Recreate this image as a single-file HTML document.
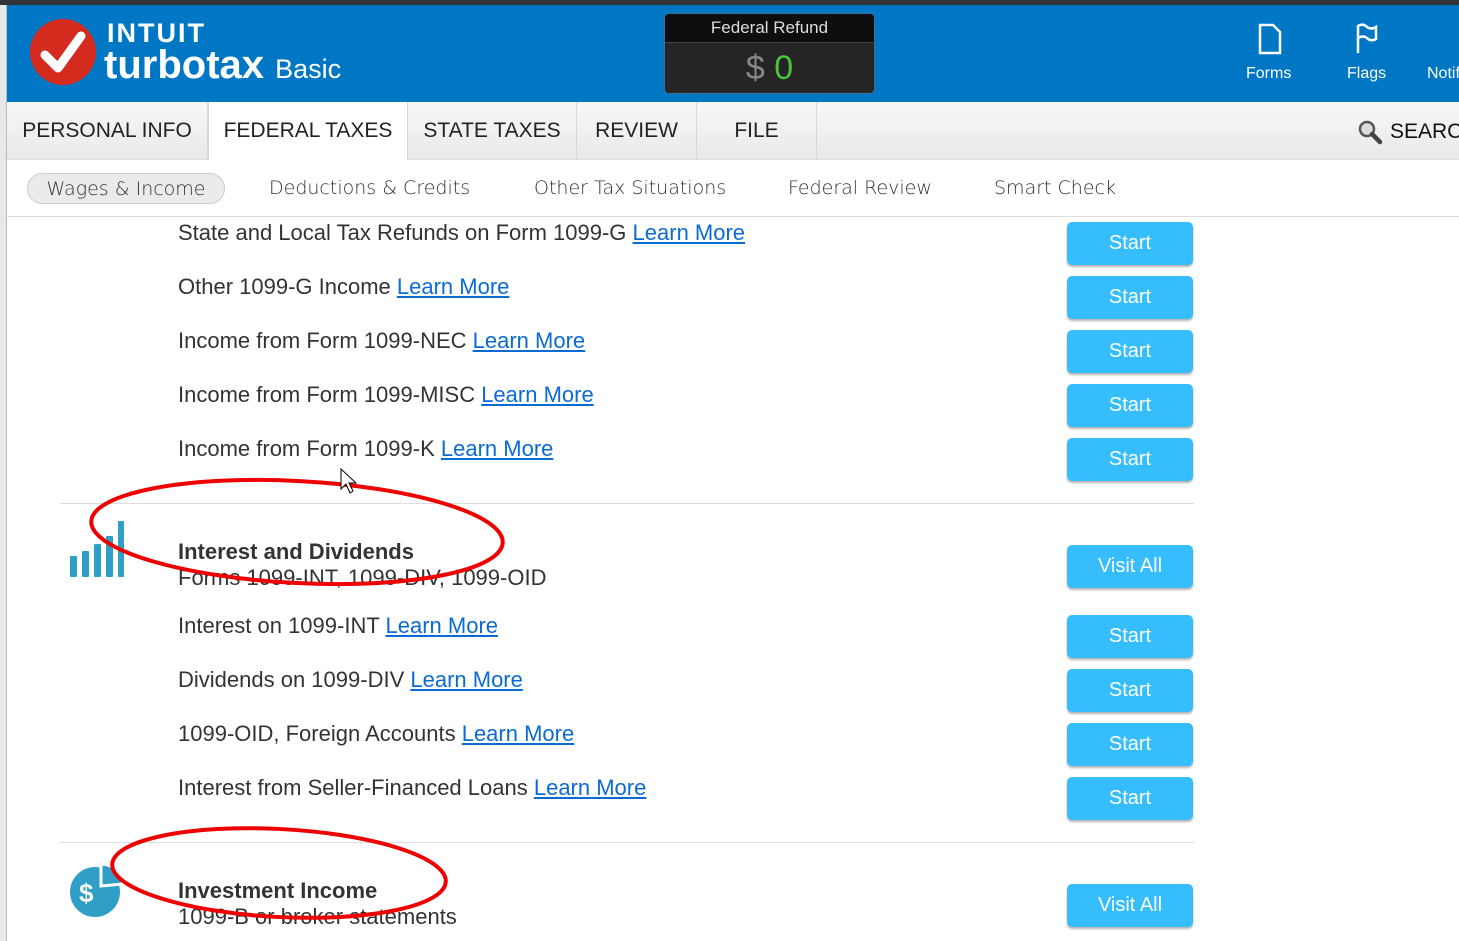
<!DOCTYPE html>
<html><head><style>
*{margin:0;padding:0;box-sizing:border-box}
body{width:1459px;height:941px;overflow:hidden;background:#fff;font-family:"Liberation Sans",Arial,sans-serif;position:relative;color:#333}
.abs{position:absolute}
.topbar{left:0;top:0;width:1459px;height:5px;background:#333438}
.leftstrip{left:0;top:0;width:7px;height:941px;background:#e8e8e8;border-right:1px solid #bbb}
.header{left:7px;top:5px;width:1452px;height:97px;background:#0077c5}
.nav{left:7px;top:102px;width:1452px;height:58px;background:linear-gradient(#f7f7f7,#e9e9e9);border-bottom:1px solid #ddd}
.tab{position:absolute;top:0;height:57px;line-height:58px;font-size:21px;color:#222;text-align:center;border-right:1px solid #d8d8d8}
.sub{left:7px;top:160px;width:1452px;height:57px;background:#fff;border-bottom:1px solid #ddd}
.st{position:absolute;top:13px;height:31px;line-height:31px;font-size:19px;color:#333;font-family:"DejaVu Sans",sans-serif;font-weight:300;letter-spacing:0}
.row{position:absolute;left:178px;font-size:22px;color:#333;white-space:nowrap}
.row a{color:#0b6bd4;text-decoration:underline}
.btn{position:absolute;left:1067px;width:126px;height:43px;background:#35bdfd;border-radius:5px;color:#fff;font-size:20px;text-align:center;line-height:43px;box-shadow:0 2px 2px rgba(0,0,0,.3)}
.hr{position:absolute;left:60px;width:1134px;height:1px;background:#ddd}
</style></head><body>
<div class="abs leftstrip"></div>
<div class="abs topbar"></div>
<div class="abs header">
 <svg class="abs" style="left:22px;top:13px" width="68" height="68" viewBox="0 0 68 68"><circle cx="34" cy="34" r="33" fill="#d52b1e"/><path d="M16 37 L29 50 L52 18" stroke="#fff" stroke-width="9" fill="none" stroke-linecap="round" stroke-linejoin="round"/></svg>
 <div class="abs" style="left:100px;top:13px;color:#fff;font-size:27px;font-weight:bold;letter-spacing:2px">INTUIT</div>
 <div class="abs" style="left:97px;top:38px;color:#fff;font-size:40px;font-weight:bold;letter-spacing:0">turbotax <span style="font-size:27px;font-weight:normal">Basic</span></div>
 <div class="abs" style="left:657px;top:8px;width:211px;height:81px;background:#252525;border:1px solid #3a6f99;border-radius:5px;overflow:hidden">
  <div style="height:29px;background:#0e0e0e;border-bottom:1px solid #444;color:#ddd;font-size:17px;text-align:center;line-height:28px">Federal Refund</div>
  <div style="text-align:center;font-size:34px;line-height:50px"><span style="color:#888">$</span> <span style="color:#4cc23f">0</span></div>
 </div>
 <svg class="abs" style="left:1251px;top:18px" width="24" height="32" viewBox="0 0 24 32"><path d="M2 2 H15 L22 9 V30 H2 Z" fill="none" stroke="#fff" stroke-width="2.5"/></svg>
 <div class="abs" style="left:1239px;top:60px;color:#fff;font-size:16px">Forms</div>
 <svg class="abs" style="left:1348px;top:18px" width="24" height="32" viewBox="0 0 24 32"><path d="M3 30 V3 Q8 0 12 4 Q16 7 21 4 V16 Q16 19 12 15 Q8 12 3 15" fill="none" stroke="#fff" stroke-width="2.5"/></svg>
 <div class="abs" style="left:1340px;top:60px;color:#fff;font-size:16px">Flags</div>
 <div class="abs" style="left:1420px;top:60px;color:#fff;font-size:16px">Notif</div>
</div>
<div class="abs nav">
 <div class="tab" style="left:0;width:201px">PERSONAL INFO</div>
 <div class="tab" style="left:201px;width:200px;background:#fff;height:58px;border-left:1px solid #d8d8d8">FEDERAL TAXES</div>
 <div class="tab" style="left:401px;width:169px">STATE TAXES</div>
 <div class="tab" style="left:570px;width:120px">REVIEW</div>
 <div class="tab" style="left:690px;width:120px">FILE</div>
 <svg class="abs" style="left:1350px;top:17px" width="26" height="26" viewBox="0 0 26 26"><circle cx="10" cy="10" r="7" fill="#ddd" stroke="#555" stroke-width="2.5"/><path d="M15 15 L23 23" stroke="#444" stroke-width="4.5" stroke-linecap="round"/></svg>
 <div class="abs" style="left:1383px;top:0;line-height:60px;font-size:21px;color:#111">SEARC</div>
</div>
<div class="abs sub">
 <div class="st" style="left:20px;width:198px;background:#ebebeb;border:1px solid #ccc;border-radius:16px;text-align:center">Wages &amp; Income</div>
 <div class="st" style="left:262px">Deductions &amp; Credits</div>
 <div class="st" style="left:527px">Other Tax Situations</div>
 <div class="st" style="left:781px">Federal Review</div>
 <div class="st" style="left:987px">Smart Check</div>
</div>

<div class="row" style="top:220px">State and Local Tax Refunds on Form 1099-G <a>Learn More</a></div>
<div class="row" style="top:274px">Other 1099-G Income <a>Learn More</a></div>
<div class="row" style="top:328px">Income from Form 1099-NEC <a>Learn More</a></div>
<div class="row" style="top:382px">Income from Form 1099-MISC <a>Learn More</a></div>
<div class="row" style="top:436px">Income from Form 1099-K <a>Learn More</a></div>
<div class="btn" style="top:222px">Start</div>
<div class="btn" style="top:276px">Start</div>
<div class="btn" style="top:330px">Start</div>
<div class="btn" style="top:384px">Start</div>
<div class="btn" style="top:438px">Start</div>
<div class="hr" style="top:503px"></div>

<svg class="abs" style="left:69px;top:520px" width="56" height="58" viewBox="0 0 56 58"><g fill="#2f9fc8"><rect x="1" y="36" width="7" height="21" rx="1"/><rect x="13" y="31" width="7" height="26" rx="1"/><rect x="25" y="24" width="7" height="33" rx="1"/><rect x="37" y="16" width="7" height="41" rx="1"/><rect x="49" y="1" width="6" height="56" rx="1"/></g></svg>
<div class="row" style="top:539px;font-weight:bold;color:#333">Interest and Dividends</div>
<div class="row" style="top:565px">Forms 1099-INT, 1099-DIV, 1099-OID</div>
<div class="btn" style="top:545px">Visit All</div>
<div class="row" style="top:613px">Interest on 1099-INT <a>Learn More</a></div>
<div class="row" style="top:667px">Dividends on 1099-DIV <a>Learn More</a></div>
<div class="row" style="top:721px">1099-OID, Foreign Accounts <a>Learn More</a></div>
<div class="row" style="top:775px">Interest from Seller-Financed Loans <a>Learn More</a></div>
<div class="btn" style="top:615px">Start</div>
<div class="btn" style="top:669px">Start</div>
<div class="btn" style="top:723px">Start</div>
<div class="btn" style="top:777px">Start</div>
<div class="hr" style="top:842px"></div>

<svg class="abs" style="left:69px;top:862px" width="56" height="56" viewBox="0 0 56 56"><circle cx="26" cy="30" r="25" fill="#2f9fc8"/><path d="M32 2 A22 22 0 0 1 54 22 L32 24 Z" fill="#2f9fc8" stroke="#fff" stroke-width="3"/><text x="10" y="40" font-size="26" font-weight="bold" fill="#fff" font-family="Liberation Sans">$</text></svg>
<div class="row" style="top:878px;font-weight:bold">Investment Income</div>
<div class="row" style="top:904px">1099-B or broker statements</div>
<div class="btn" style="top:884px">Visit All</div>

<svg class="abs" style="left:0;top:0" width="1459" height="941"><g fill="none" stroke="#e00" stroke-width="4"><ellipse cx="297" cy="532" rx="206" ry="51" transform="rotate(3 297 532)"/><ellipse cx="279" cy="873" rx="167" ry="44" transform="rotate(3 279 873)"/></g>
<path d="M341 469 L341 489 L346 484 L350 493 L353 491 L349 483 L356 483 Z" fill="#fff" stroke="#000" stroke-width="1"/></svg>
</body></html>
